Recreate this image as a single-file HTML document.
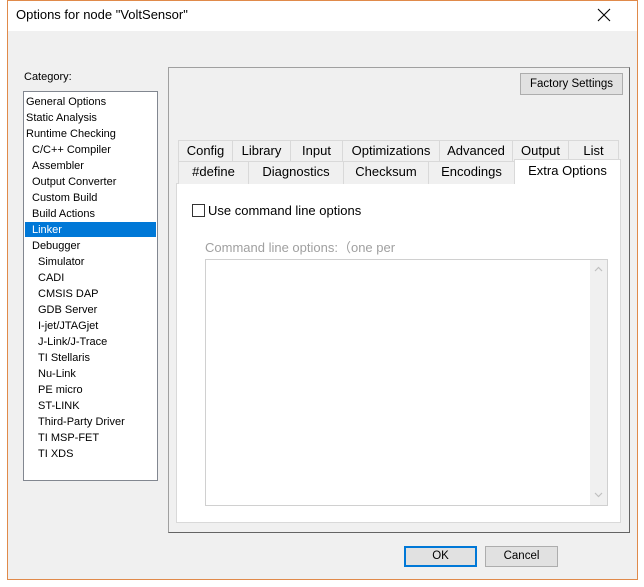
<!DOCTYPE html>
<html><head><meta charset="utf-8"><style>
*{margin:0;padding:0;box-sizing:border-box}
body{width:644px;height:587px;background:#fff;position:relative;overflow:hidden;font-family:"Liberation Sans",sans-serif;font-size:11px;color:#000}
.a{position:absolute}
#dlg{left:7px;top:0;width:631px;height:580px;border:1px solid #e08a4a;background:#f0f0f0}
#title{left:8px;top:1px;width:629px;height:30px;background:#fff}
.btn{position:absolute;background:#e1e1e1;border:1px solid #adadad;text-align:center;font-size:11.5px}
.tab{position:absolute;background:#f0f0f0;border:1px solid #d9d9d9;border-bottom:none;font-size:13px;text-align:center;line-height:20px}
.li{position:absolute;left:0;white-space:nowrap;line-height:16px;height:16px}
</style></head><body>
<div class="a" id="dlg"></div>
<div class="a" id="title"></div>
<div class="a" style="left:16px;top:7px;font-size:13px">Options for node "VoltSensor"</div>
<svg class="a" style="left:597px;top:8px" width="14" height="14"><path d="M1 1L13 13M13 1L1 13" stroke="#000" stroke-width="1.1"/></svg>
<div class="a" style="left:24px;top:71px;font-size:11px">Category:</div>
<div class="a" style="left:23px;top:91px;width:135px;height:390px;background:#fff;border:1px solid #828790">
<div class="a" style="left:1px;top:130px;width:131px;height:15px;background:#0078d7"></div>
<div class="a" style="left:0;top:2px;width:133px">
<div class="li" style="top:0;left:2px">General Options</div>
<div class="li" style="top:16px;left:2px">Static Analysis</div>
<div class="li" style="top:32px;left:2px">Runtime Checking</div>
<div class="li" style="top:48px;left:8px">C/C++ Compiler</div>
<div class="li" style="top:64px;left:8px">Assembler</div>
<div class="li" style="top:80px;left:8px">Output Converter</div>
<div class="li" style="top:96px;left:8px">Custom Build</div>
<div class="li" style="top:112px;left:8px">Build Actions</div>
<div class="li" style="top:128px;left:8px;color:#fff">Linker</div>
<div class="li" style="top:144px;left:8px">Debugger</div>
<div class="li" style="top:160px;left:14px">Simulator</div>
<div class="li" style="top:176px;left:14px">CADI</div>
<div class="li" style="top:192px;left:14px">CMSIS DAP</div>
<div class="li" style="top:208px;left:14px">GDB Server</div>
<div class="li" style="top:224px;left:14px">I-jet/JTAGjet</div>
<div class="li" style="top:240px;left:14px">J-Link/J-Trace</div>
<div class="li" style="top:256px;left:14px">TI Stellaris</div>
<div class="li" style="top:272px;left:14px">Nu-Link</div>
<div class="li" style="top:288px;left:14px">PE micro</div>
<div class="li" style="top:304px;left:14px">ST-LINK</div>
<div class="li" style="top:320px;left:14px">Third-Party Driver</div>
<div class="li" style="top:336px;left:14px">TI MSP-FET</div>
<div class="li" style="top:352px;left:14px">TI XDS</div>
</div></div>
<div class="a" style="left:168px;top:67px;width:462px;height:466px;border:1px solid #646464;border-top-color:#a0a0a0;border-left-color:#a0a0a0"></div>
<div class="btn" style="left:520px;top:73px;width:103px;height:22px;line-height:20px">Factory Settings</div>
<div class="tab" style="left:178px;top:140px;width:55px">Config</div>
<div class="tab" style="left:232px;top:140px;width:59px">Library</div>
<div class="tab" style="left:290px;top:140px;width:53px">Input</div>
<div class="tab" style="left:342px;top:140px;width:98px">Optimizations</div>
<div class="tab" style="left:439px;top:140px;width:74px">Advanced</div>
<div class="tab" style="left:512px;top:140px;width:57px">Output</div>
<div class="tab" style="left:568px;top:140px;width:51px">List</div>
<div class="a" style="left:176px;top:183px;width:445px;height:340px;background:#fff;border:1px solid #d9d9d9"></div>
<div class="tab" style="left:178px;top:161px;width:71px;height:23px">#define</div>
<div class="tab" style="left:248px;top:161px;width:96px;height:23px">Diagnostics</div>
<div class="tab" style="left:343px;top:161px;width:86px;height:23px">Checksum</div>
<div class="tab" style="left:428px;top:161px;width:87px;height:23px">Encodings</div>
<div class="tab" style="left:514px;top:159px;width:107px;height:25px;background:#fff;line-height:22px;border-color:#d9d9d9">Extra Options</div>
<div class="a" style="left:192px;top:204px;width:13px;height:13px;border:1px solid #333;background:#fff"></div>
<div class="a" style="left:208px;top:203px;font-size:13px">Use command line options</div>
<div class="a" style="left:205px;top:237px;font-size:13px;color:#a0a0a0">Command line options:（one per</div>
<div class="a" style="left:205px;top:259px;width:403px;height:247px;border:1px solid #d0d0d0;background:#fff">
<div class="a" style="right:0;top:0;width:17px;height:245px;background:#f0f0f0"></div>
<svg class="a" style="right:4px;top:6px" width="9" height="6"><path d="M1 5L4.5 1.5L8 5" stroke="#c0c0c0" fill="none" stroke-width="1.2"/></svg>
<svg class="a" style="right:4px;bottom:7px" width="9" height="6"><path d="M1 1L4.5 4.5L8 1" stroke="#c0c0c0" fill="none" stroke-width="1.2"/></svg>
</div>
<div class="btn" style="left:404px;top:546px;width:73px;height:21px;line-height:17px;border:2px solid #0078d7">OK</div>
<div class="btn" style="left:485px;top:546px;width:73px;height:21px;line-height:19px">Cancel</div>
</body></html>
